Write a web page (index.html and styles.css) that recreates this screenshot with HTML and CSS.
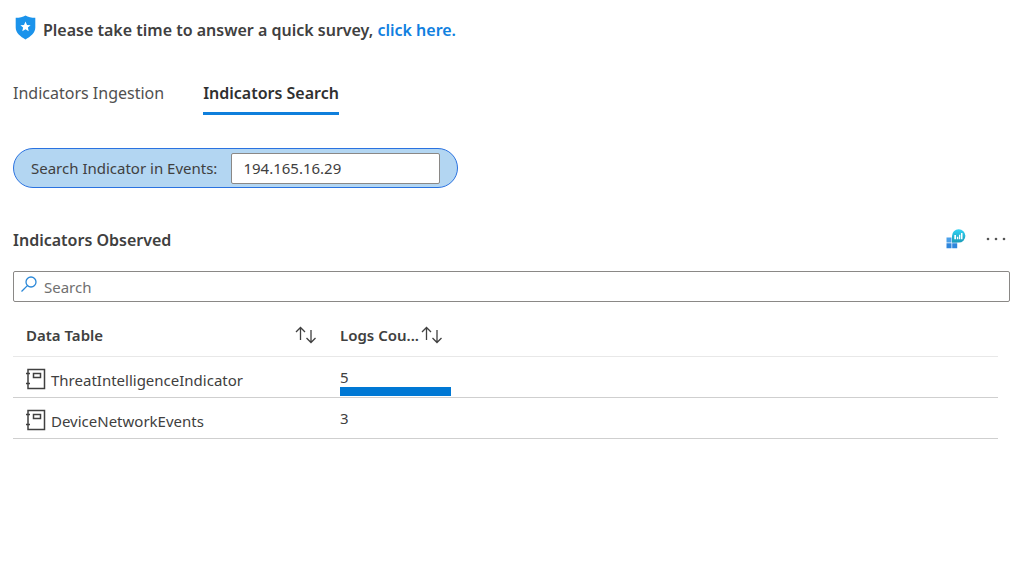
FILE: index.html
```html
<!DOCTYPE html>
<html lang="en">
<head>
  <meta charset="UTF-8" />
  <meta name="viewport" content="width=device-width, initial-scale=1.0"/>
  <title>Threat Intelligence | Indicators Search</title>
  <link rel="stylesheet" href="styles.css">
</head>
<body>
  <div class="survey">
    <svg class="shield" width="21" height="25" viewBox="0 0 21 25" aria-hidden="true">
      <path fill="#1b93eb" d="M10.500 0.500C13 2.200 16.500 2.800 20.300 2.800V12.500C20.300 18 15.500 21.500 10.500 24.500C5.500 21.500 0.700 18 0.700 12.500V2.800C4.500 2.800 8 2.200 10.500 0.500Z"/>
      <path fill="#fff" d="M10.500 6.500L12 9.900L15.600 10.200L12.900 12.600L13.700 16.200L10.500 14.300L7.300 16.200L8.100 12.600L5.400 10.200L9 9.900Z"/>
    </svg>
    <span>Please take time to answer a quick survey, <a href="#">click here.</a></span>
  </div>

  <nav class="tabs">
    <a href="#" class="tab">Indicators Ingestion</a>
    <a href="#" class="tab active">Indicators Search</a>
  </nav>

  <form class="param">
    <label for="indicator">Search Indicator in Events:</label>
    <input type="text" id="indicator" value="194.165.16.29" />
  </form>

  <section>
    <div class="section-header">
      <h2>Indicators Observed</h2>
      <div class="actions">
        <button type="button" title="Open in Logs">
          <svg width="20" height="20" viewBox="0 0 20 20">
            <defs>
              <linearGradient id="pin" x1="0" y1="0" x2="0" y2="1">
                <stop offset="0" stop-color="#32d4f5"/>
                <stop offset="1" stop-color="#1a9bb8"/>
              </linearGradient>
            </defs>
            <path fill="#4ba0ea" d="M0.500 8.500H5.500V13.500H0.500ZM6 8.500H11.200V13.500H6Z"/>
            <path fill="#2f86dc" d="M0.500 14.200H5.500V19.200H0.500ZM6.200 14.200H11.200V19.200H6.200Z"/>
            <path fill="url(#pin)" d="M6 13.600V7A6.700 6.700 0 1 1 12.700 13.600Z"/>
            <path fill="#fff" d="M8.300 6H10V10.200H8.300ZM10.900 7.700H12.300V10.200H10.900ZM13 5.700H14.300V10.200H13ZM15 4H16.500V10.200H15Z"/>
          </svg>
        </button>
        <button type="button" title="More">
          <svg width="20" height="20" viewBox="0 0 20 20" fill="#555">
            <circle cx="2" cy="10" r="1.300"/>
            <circle cx="10" cy="10" r="1.300"/>
            <circle cx="18" cy="10" r="1.300"/>
          </svg>
        </button>
      </div>
    </div>

    <div class="search-box">
      <svg width="16" height="16" viewBox="0 0 16 16" fill="none" stroke="#2b88d8" stroke-width="1.300" aria-hidden="true">
        <circle cx="10" cy="6" r="5"/>
        <path d="M6.400 9.600L0.500 15.500"/>
      </svg>
      <input type="text" placeholder="Search" aria-label="Search" />
    </div>

    <table>
      <thead>
        <tr>
          <th class="name-col">
            <div class="th-inner spread">
              <span>Data Table</span>
              <svg class="sort" width="22" height="18" viewBox="0 0 22 18"><path d="M5.500 14V1.500M1 6L5.500 1.500L10 6M16 4V16.500M11.500 12L16 16.500L20.500 12"/></svg>
            </div>
          </th>
          <th>
            <div class="th-inner">
              <span>Logs Cou...</span>
              <svg class="sort" width="22" height="18" viewBox="0 0 22 18"><path d="M5.500 14V1.500M1 6L5.500 1.500L10 6M16 4V16.500M11.500 12L16 16.500L20.500 12"/></svg>
            </div>
          </th>
        </tr>
      </thead>
      <tbody>
        <tr>
          <td class="name-col">
            <div class="name">
              <svg class="book" width="20" height="22" viewBox="0 0 20 22"><path d="M2 1.500H18.500V20.500H2ZM0 5.500H4M0 15.500H4M7.500 5.500H14.500V9.500H7.500Z"/></svg>
              <span>ThreatIntelligenceIndicator</span>
            </div>
          </td>
          <td>
            <div class="count">5</div>
            <div class="bar-track"><div class="bar" style="width: 100%"></div></div>
          </td>
        </tr>
        <tr>
          <td class="name-col">
            <div class="name">
              <svg class="book" width="20" height="22" viewBox="0 0 20 22"><path d="M2 1.500H18.500V20.500H2ZM0 5.500H4M0 15.500H4M7.500 5.500H14.500V9.500H7.500Z"/></svg>
              <span>DeviceNetworkEvents</span>
            </div>
          </td>
          <td>
            <div class="count">3</div>
            <div class="bar-track"><div class="bar" style="width: 0%"></div></div>
          </td>
        </tr>
      </tbody>
    </table>
  </section>
</body>
</html>
```
FILE: styles.css
```css
* {
  box-sizing: border-box;
}

body {
  font-family: 'Segoe UI', 'Noto Sans', sans-serif;
  font-size: 16px;
  line-height: 24px;
  background-color: #fff;
  color: #404040;
  margin: 0;
  padding: 14px 14px 14px 13px;
}

a {
  color: #0f80e0;
  text-decoration: none;
}

svg {
  display: block;
  flex-shrink: 0;
}

.shield {
  margin-bottom: 4px;
}

.survey {
  display: flex;
  align-items: center;
  gap: 7px;
  padding-left: 2px;
  height: 31px;
  font-weight: 600;
}

.tabs {
  display: flex;
  gap: 39px;
  margin-top: 36px;
}

.tab {
  color: #505050;
  height: 34px;
  border-bottom: 3px solid transparent;
}

.tab.active {
  color: #303030;
  font-weight: 600;
  border-bottom-color: #0f7fdc;
}

.param {
  display: inline-flex;
  align-items: center;
  gap: 14px;
  height: 40px;
  margin-top: 33px;
  padding: 0 17px;
  background: #b3d6f2;
  border: 1px solid #2a72e0;
  border-radius: 20px;
  font-size: 15px;
}

.param input {
  width: 209px;
  height: 31px;
  padding: 0 11px;
  border: 1px solid #8a8886;
  border-radius: 2px;
  font: inherit;
  color: #404040;
}

.section-header {
  display: flex;
  align-items: center;
  justify-content: space-between;
  margin-top: 40px;
}

h2 {
  margin: 0;
  font-size: 16px;
  font-weight: 600;
}

.actions {
  display: flex;
  gap: 20px;
  padding: 0 4px 2px 0;
}

.actions button {
  padding: 0;
  border: none;
  background: none;
  cursor: pointer;
}

.search-box {
  display: flex;
  align-items: center;
  gap: 7px;
  height: 31px;
  margin-top: 19px;
  padding: 0 7px;
  border: 1px solid #8a8886;
  border-radius: 2px;
  font-size: 15px;
}

.search-box svg {
  margin-bottom: 6px;
}

.search-box input {
  flex: 1;
  padding: 0;
  border: none;
  outline: none;
  font: inherit;
}

.search-box input::placeholder {
  color: #707070;
  opacity: 1;
}

table {
  width: calc(100% - 12px);
  margin-top: 12px;
  border-collapse: collapse;
  table-layout: fixed;
  font-size: 15px;
}

th {
  height: 42px;
  padding: 0;
  border-bottom: 1px solid #e8e8e8;
  text-align: left;
  font-weight: 600;
}

td {
  height: 41px;
  padding: 0;
  border-bottom: 1px solid #cfcfcf;
  vertical-align: bottom;
}

.name-col {
  width: 327px;
  padding: 0 23px 0 13px;
}

td.name-col {
  padding-bottom: 5px;
}

.th-inner {
  display: flex;
  align-items: center;
  gap: 2px;
}

.spread {
  justify-content: space-between;
}

.sort {
  fill: none;
  stroke: #404040;
  stroke-width: 1.3;
}

.name {
  display: flex;
  align-items: center;
  gap: 5px;
}

.book {
  margin-bottom: 2px;
  fill: none;
  stroke: #404040;
  stroke-width: 1.5;
}

.count {
  height: 22px;
}

.bar-track {
  width: 111px;
  height: 10px;
}

.bar {
  height: 9px;
  background: #0078d4;
}
```
